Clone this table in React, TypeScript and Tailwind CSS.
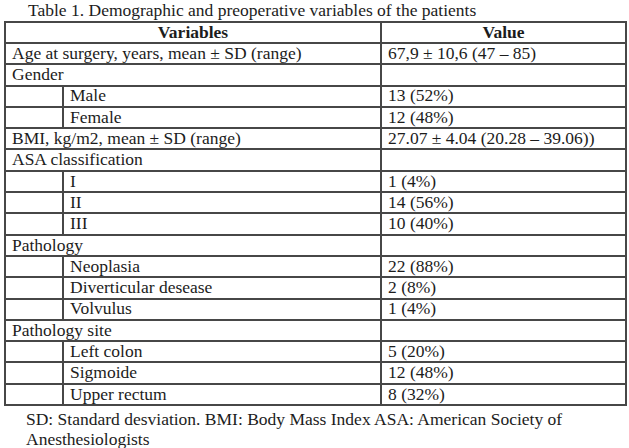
const rows: { label: string; value: string; sub?: boolean }[] = [
  { label: 'Age at surgery, years, mean ± SD (range)', value: '67,9 ± 10,6 (47 – 85)' },
  { label: 'Gender', value: '' },
  { label: 'Male', value: '13 (52%)', sub: true },
  { label: 'Female', value: '12 (48%)', sub: true },
  { label: 'BMI, kg/m2, mean ± SD (range)', value: '27.07 ± 4.04 (20.28 – 39.06))' },
  { label: 'ASA classification', value: '' },
  { label: 'I', value: '1 (4%)', sub: true },
  { label: 'II', value: '14 (56%)', sub: true },
  { label: 'III', value: '10 (40%)', sub: true },
  { label: 'Pathology', value: '' },
  { label: 'Neoplasia', value: '22 (88%)', sub: true },
  { label: 'Diverticular desease', value: '2 (8%)', sub: true },
  { label: 'Volvulus', value: '1 (4%)', sub: true },
  { label: 'Pathology site', value: '' },
  { label: 'Left colon', value: '5 (20%)', sub: true },
  { label: 'Sigmoide', value: '12 (48%)', sub: true },
  { label: 'Upper rectum', value: '8 (32%)', sub: true },
];

const cell = 'border-2 border-[#474747] px-[6px] py-0 leading-none align-middle';

export default function App() {
  return (
    <div className="w-[629px] h-[448px] overflow-hidden bg-white text-[#1c1c1c] font-['Liberation_Serif',serif] text-[17.5px]">
      <p className="pl-[28px] h-[21px] leading-[20px]">
        Table 1. Demographic and preoperative variables of the patients
      </p>
      <table className="ml-[4px] w-[621px] border-collapse table-fixed">
        <colgroup>
          <col className="w-[58px]" />
          <col className="w-[318px]" />
          <col className="w-[245px]" />
        </colgroup>
        <tbody>
          <tr className="h-[21px]">
            <th colSpan={2} className={`${cell} text-center font-bold`}>Variables</th>
            <th className={`${cell} text-center font-bold`}>Value</th>
          </tr>
          {rows.map((r) =>
            r.sub ? (
              <tr key={r.label} className="h-[21.3px]">
                <td className={cell}></td>
                <td className={cell}>{r.label}</td>
                <td className={cell}>{r.value}</td>
              </tr>
            ) : (
              <tr key={r.label} className="h-[21.3px]">
                <td colSpan={2} className={cell}>{r.label}</td>
                <td className={cell}>{r.value}</td>
              </tr>
            )
          )}
        </tbody>
      </table>
      <p className="pl-[26px] pt-[4px] leading-[19.5px]">
        SD: Standard desviation. BMI: Body Mass Index ASA: American Society of
        <br />
        Anesthesiologists
      </p>
    </div>
  );
}
